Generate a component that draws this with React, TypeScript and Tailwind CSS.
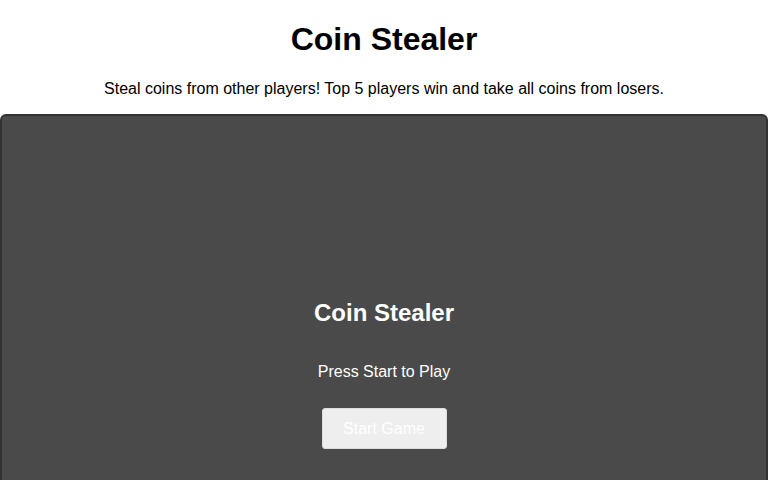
import React from "react";

export default function App() {
  return (
    <div className="w-[768px] bg-white" style={{ fontFamily: '"Liberation Sans", Arial, sans-serif' }}>
      <h1 className="pt-[21px] text-center text-[32px] font-bold leading-[37px] text-black">Coin Stealer</h1>
      <p className="mt-[22px] text-center text-[16px] leading-[18px] text-black">
        Steal coins from other players! Top 5 players win and take all coins from losers.
      </p>
      <div className="mt-[16px] flex h-[600px] flex-col items-center rounded-[6px] border-2 border-[#333333] bg-[#4a4a4a] pt-[183px]">
        <h2 className="text-[24px] font-bold leading-[28px] text-white">Coin Stealer</h2>
        <p className="mt-[36px] text-[16px] leading-[18px] text-white">Press Start to Play</p>
        <button className="mt-[27px] h-[41px] w-[125px] rounded-[3px] border border-[#dddddd] bg-[#eeeeee] text-[16px] text-white">
          Start Game
        </button>
      </div>
    </div>
  );
}
